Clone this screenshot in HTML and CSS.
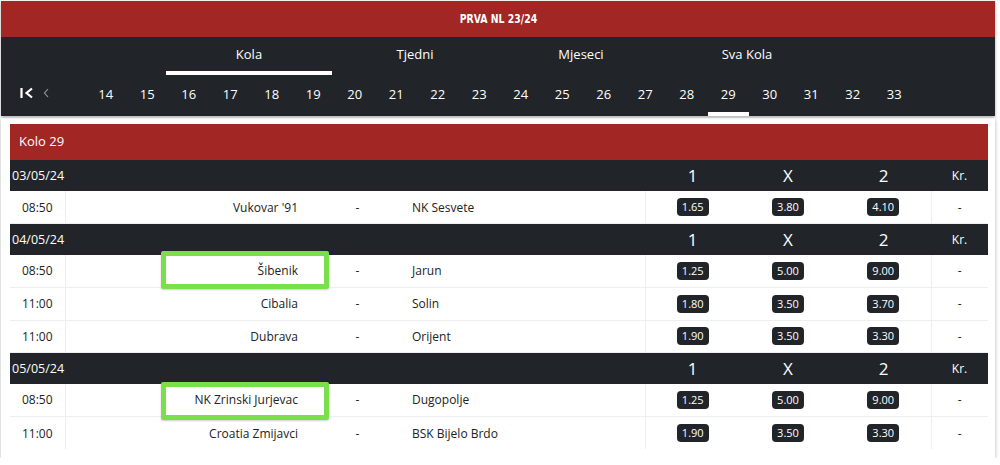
FILE: index.html
```html
<!DOCTYPE html>
<html lang="hr">
<head>
    <meta charset="UTF-8">
    <meta name="viewport" content="width=device-width, initial-scale=1.0">
    <title>Prva NL 23/24</title>
    <link rel="stylesheet" href="styles.css">
</head>
<body>
    <div class="top">
        <div class="title"><span>PRVA NL 23/24</span></div>
        <div class="nav">
            <div class="tabs">
                <div class="tab active">Kola</div>
                <div class="tab">Tjedni</div>
                <div class="tab">Mjeseci</div>
                <div class="tab">Sva Kola</div>
            </div>
            <div class="rounds">
                <div class="arrows">
                    <svg class="first" width="14" height="12" viewBox="0 0 14 12">
                        <path d="M1.5 1v10" stroke="#fff" stroke-width="2.2" fill="none"/>
                        <path d="M12 1.5L6.5 6l5.5 4.5" stroke="#fff" stroke-width="2.2" fill="none"/>
                    </svg>
                    <svg class="prev" width="6" height="10" viewBox="0 0 6 10">
                        <path d="M5 1L1.5 5 5 9" stroke="#9a9da0" stroke-width="1.1" fill="none"/>
                    </svg>
                </div>
                <div class="round">14</div>
                <div class="round">15</div>
                <div class="round">16</div>
                <div class="round">17</div>
                <div class="round">18</div>
                <div class="round">19</div>
                <div class="round">20</div>
                <div class="round">21</div>
                <div class="round">22</div>
                <div class="round">23</div>
                <div class="round">24</div>
                <div class="round">25</div>
                <div class="round">26</div>
                <div class="round">27</div>
                <div class="round">28</div>
                <div class="round active">29</div>
                <div class="round">30</div>
                <div class="round">31</div>
                <div class="round">32</div>
                <div class="round">33</div>
            </div>
        </div>
    </div>

    <div class="card">
        <div class="card-head">Kolo 29</div>
        <table>
            <colgroup>
                <col class="c-time"><col class="c-home"><col class="c-dash"><col class="c-away">
                <col class="c-odd"><col class="c-odd2"><col class="c-odd"><col class="c-kr">
            </colgroup>
            <tr class="date">
                <td colspan="4" class="date-text">03/05/24</td>
                <td class="lbl">1</td><td class="lbl">X</td><td class="lbl">2</td><td class="kr">Kr.</td>
            </tr>
            <tr>
                <td class="time">08:50</td><td class="home">Vukovar '91</td><td class="dash">-</td><td class="away">NK Sesvete</td>
                <td class="odd first-odd"><span class="badge">1.65</span></td><td class="odd"><span class="badge">3.80</span></td><td class="odd"><span class="badge">4.10</span></td><td class="krv">-</td>
            </tr>
            <tr class="date">
                <td colspan="4" class="date-text">04/05/24</td>
                <td class="lbl">1</td><td class="lbl">X</td><td class="lbl">2</td><td class="kr">Kr.</td>
            </tr>
            <tr>
                <td class="time">08:50</td><td class="home"><span class="mark m1"></span>Šibenik</td><td class="dash">-</td><td class="away">Jarun</td>
                <td class="odd first-odd"><span class="badge">1.25</span></td><td class="odd"><span class="badge">5.00</span></td><td class="odd"><span class="badge">9.00</span></td><td class="krv">-</td>
            </tr>
            <tr>
                <td class="time">11:00</td><td class="home">Cibalia</td><td class="dash">-</td><td class="away">Solin</td>
                <td class="odd first-odd"><span class="badge">1.80</span></td><td class="odd"><span class="badge">3.50</span></td><td class="odd"><span class="badge">3.70</span></td><td class="krv">-</td>
            </tr>
            <tr>
                <td class="time">11:00</td><td class="home">Dubrava</td><td class="dash">-</td><td class="away">Orijent</td>
                <td class="odd first-odd"><span class="badge">1.90</span></td><td class="odd"><span class="badge">3.50</span></td><td class="odd"><span class="badge">3.30</span></td><td class="krv">-</td>
            </tr>
            <tr class="date">
                <td colspan="4" class="date-text">05/05/24</td>
                <td class="lbl">1</td><td class="lbl">X</td><td class="lbl">2</td><td class="kr">Kr.</td>
            </tr>
            <tr>
                <td class="time">08:50</td><td class="home"><span class="mark m2"></span>NK Zrinski Jurjevac</td><td class="dash">-</td><td class="away">Dugopolje</td>
                <td class="odd first-odd"><span class="badge">1.25</span></td><td class="odd"><span class="badge">5.00</span></td><td class="odd"><span class="badge">9.00</span></td><td class="krv">-</td>
            </tr>
            <tr class="last">
                <td class="time">11:00</td><td class="home">Croatia Zmijavci</td><td class="dash">-</td><td class="away">BSK Bijelo Brdo</td>
                <td class="odd first-odd"><span class="badge">1.90</span></td><td class="odd"><span class="badge">3.50</span></td><td class="odd"><span class="badge">3.30</span></td><td class="krv">-</td>
            </tr>
        </table>
    </div>
</body>
</html>
```

FILE: styles.css
```css
*{ box-sizing: border-box;}
body{
    margin:0;
    padding:1px 0 0 1px;
    background:#fff;
    font-family:"Open Sans", "Noto Sans", sans-serif;
    color:#212529;
}
.top{
    width:994px;
    box-shadow:0 1px 3px rgba(0,0,0,0.35);
}
.title{
    height:36px;
    background:#a12624;
    color:#fff;
    text-align:center;
    line-height:36px;
    font-family:"DejaVu Sans Condensed", "DejaVu Sans", sans-serif;
    font-stretch:condensed;
    font-weight:bold;
    font-size:13px;
}
.title span{
    display:inline-block;
    transform:scaleX(0.8);
}
.nav{
    background:#212529;
    color:#fff;
}
.tabs{
    display:flex;
    justify-content:center;
}
.tab{
    width:166px;
    height:38px;
    padding-top:8px;
    line-height:18px;
    font-size:13px;
    text-align:center;
    border-bottom:4px solid transparent;
}
.tab.active{
    border-bottom-color:#fff;
}
.rounds{
    display:flex;
    height:41px;
}
.arrows{
    width:84px;
    display:flex;
    align-items:center;
    padding:0 0 6px 19px;
}
.arrows .prev{
    margin-left:9px;
}
.round{
    width:41.5px;
    padding-top:10px;
    line-height:18px;
    font-size:13px;
    text-align:center;
    border-bottom:4px solid transparent;
}
.round.active{
    border-bottom-color:#fff;
}
.card{
    width:994px;
    margin-top:2px;
    padding:6px 7px 9px 9px;
    box-shadow:0 1px 4px rgba(0,0,0,0.3);
}
.card-head{
    height:36px;
    background:#a12624;
    color:#fff;
    font-size:13px;
    line-height:35px;
    padding-left:9px;
}
table{
    width:978px;
    border-collapse:collapse;
    table-layout:fixed;
    font-size:12px;
}
.c-time{ width:55px;}
.c-home{ width:265px;}
.c-dash{ width:55px;}
.c-away{ width:260px;}
.c-odd{ width:95px;}
.c-odd2{ width:96px;}
.c-kr{ width:57px;}
td{
    padding:0;
    height:32.7px;
    border-bottom:1px solid #eeeeee;
    color:#222;
}
tr.last td{
    border-bottom:none;
}
tr.date td{
    height:31px;
    background:#212529;
    color:#fff;
    border-bottom:none;
}
.date-text{
    padding-left:2px;
    font-size:12.5px;
}
.lbl{
    text-align:center;
    font-size:17px;
}
.kr{
    text-align:center;
    font-size:12px;
}
.time{
    text-align:center;
    border-right:1px solid #eeeeee;
}
.home{
    text-align:right;
    padding-right:32px;
    position:relative;
}
.dash{
    text-align:center;
}
.away{
    padding-left:27px;
}
.odd{
    text-align:center;
}
.first-odd{
    border-left:1px solid #eeeeee;
}
.krv{
    text-align:center;
    border-left:1px solid #eeeeee;
}
.badge{
    display:inline-block;
    background:#212529;
    color:#fff;
    font-size:11px;
    line-height:18px;
    padding:0 5px;
    border-radius:4px;
}
.mark{
    position:absolute;
    right:1px;
    width:168px;
    height:38px;
    border:5px solid #79e04b;
    border-radius:2px;
    box-shadow:0 1px 2px rgba(0,0,0,0.2);
}
.m1{ top:-4px;}
.m2{ top:-2px;}
```
